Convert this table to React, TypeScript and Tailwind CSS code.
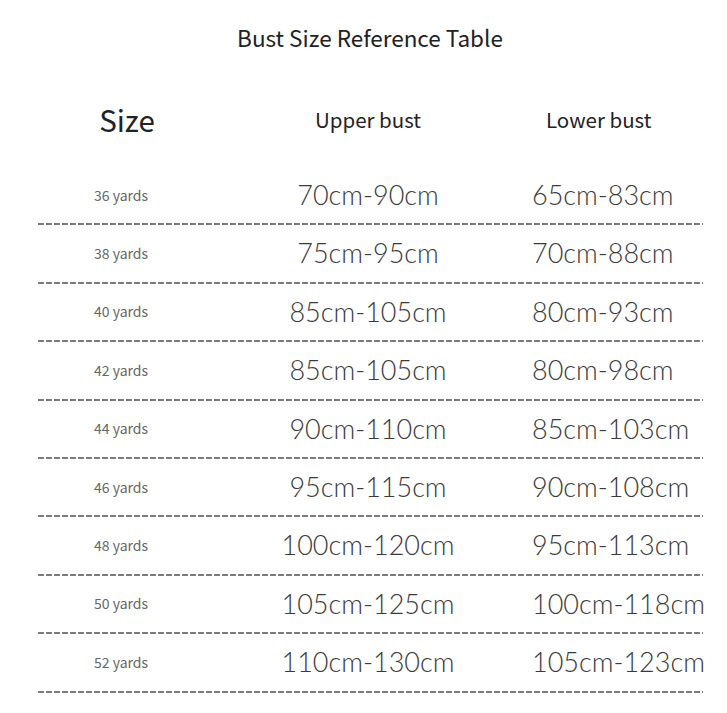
const rows = [
  { size: "36 yards", upper: "70cm-90cm", lower: "65cm-83cm" },
  { size: "38 yards", upper: "75cm-95cm", lower: "70cm-88cm" },
  { size: "40 yards", upper: "85cm-105cm", lower: "80cm-93cm" },
  { size: "42 yards", upper: "85cm-105cm", lower: "80cm-98cm" },
  { size: "44 yards", upper: "90cm-110cm", lower: "85cm-103cm" },
  { size: "46 yards", upper: "95cm-115cm", lower: "90cm-108cm" },
  { size: "48 yards", upper: "100cm-120cm", lower: "95cm-113cm" },
  { size: "50 yards", upper: "105cm-125cm", lower: "100cm-118cm" },
  { size: "52 yards", upper: "110cm-130cm", lower: "105cm-123cm" },
];

const cjk = "font-['Noto_Sans_CJK_SC','Noto_Sans',sans-serif]";
const cell = "flex justify-center whitespace-nowrap";
const value = "font-['Lato',sans-serif] font-light text-[27px] text-[#3a3a3a] whitespace-nowrap";

export default function App() {
  return (
    <div className="w-[727px] h-[713px] bg-white overflow-hidden pt-[22px]">
      <h1 className={`${cjk} text-center pl-[13px] text-[22.5px] leading-[30px] text-[#222]`}>
        Bust Size Reference Table
      </h1>

      <div className="mx-[38px] w-[665px]">
        {/* header */}
        <div className={`${cjk} mt-[45px] h-[30px] grid grid-cols-[166px_328px_1fr] items-center text-[#222]`}>
          <div className={`${cell} text-[29.5px] pl-[12px]`}>Size</div>
          <div className={`${cell} text-[20.5px]`}>Upper bust</div>
          <div className="whitespace-nowrap text-[20.5px] pl-[14px]">Lower bust</div>
        </div>

        <div className="mt-[40px]">
          {rows.map((r) => (
            <div key={r.size} className="h-[58.4px] flex flex-col">
              <div className="flex-1 grid grid-cols-[166px_328px_1fr] items-center">
                <div className={`${cjk} ${cell} text-[14px] text-[#666]`}>{r.size}</div>
                <div className={`${value} flex justify-center`}>{r.upper}</div>
                <div className={value}>{r.lower}</div>
              </div>
              <div className="h-[2px] bg-[linear-gradient(to_right,#7a7a7a_0_6px,transparent_6px_8px)] bg-[length:8px_2px] bg-repeat-x" />
            </div>
          ))}
        </div>
      </div>
    </div>
  );
}
